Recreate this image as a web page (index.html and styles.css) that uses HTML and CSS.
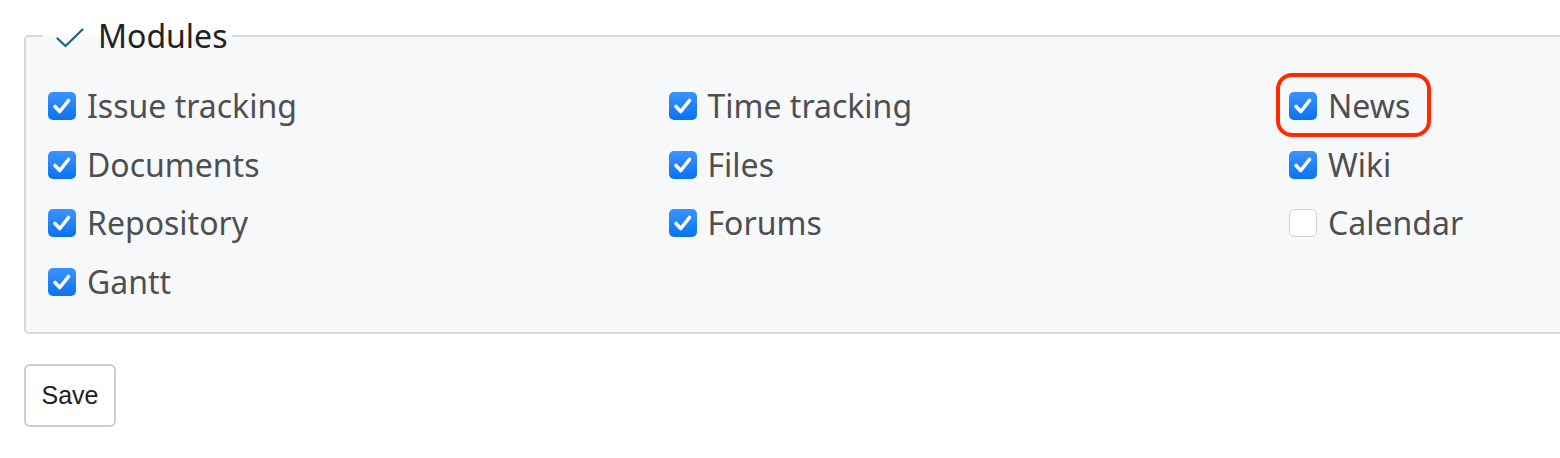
FILE: index.html
```html
<!DOCTYPE html>
<html>
<head>
<meta charset="utf-8">
<link rel="stylesheet" href="styles.css">
</head>
<body>
<div class="page">
  <fieldset class="modules">
    <legend class="legend">
      <svg class="legend-check" width="28" height="20" viewBox="0 0 28 20"><path d="M1.5 10.5 L9.5 18 L26.5 1.5" fill="none" stroke="#1f5f86" stroke-width="2.2" stroke-linecap="round" stroke-linejoin="round"/></svg>
      <span>Modules</span>
    </legend>
    <div class="grid">
      <label class="item"><span class="box on"><svg viewBox="0 0 28 28"><path d="M7 14.5 L11.8 19.5 L20.5 8.5" fill="none" stroke="#fff" stroke-width="3.6" stroke-linecap="round" stroke-linejoin="round"/></svg></span>Issue tracking</label>
      <label class="item"><span class="box on"><svg viewBox="0 0 28 28"><path d="M7 14.5 L11.8 19.5 L20.5 8.5" fill="none" stroke="#fff" stroke-width="3.6" stroke-linecap="round" stroke-linejoin="round"/></svg></span>Time tracking</label>
      <label class="item highlight"><span class="box on"><svg viewBox="0 0 28 28"><path d="M7 14.5 L11.8 19.5 L20.5 8.5" fill="none" stroke="#fff" stroke-width="3.6" stroke-linecap="round" stroke-linejoin="round"/></svg></span>News</label>
      <label class="item"><span class="box on"><svg viewBox="0 0 28 28"><path d="M7 14.5 L11.8 19.5 L20.5 8.5" fill="none" stroke="#fff" stroke-width="3.6" stroke-linecap="round" stroke-linejoin="round"/></svg></span>Documents</label>
      <label class="item"><span class="box on"><svg viewBox="0 0 28 28"><path d="M7 14.5 L11.8 19.5 L20.5 8.5" fill="none" stroke="#fff" stroke-width="3.6" stroke-linecap="round" stroke-linejoin="round"/></svg></span>Files</label>
      <label class="item"><span class="box on"><svg viewBox="0 0 28 28"><path d="M7 14.5 L11.8 19.5 L20.5 8.5" fill="none" stroke="#fff" stroke-width="3.6" stroke-linecap="round" stroke-linejoin="round"/></svg></span>Wiki</label>
      <label class="item"><span class="box on"><svg viewBox="0 0 28 28"><path d="M7 14.5 L11.8 19.5 L20.5 8.5" fill="none" stroke="#fff" stroke-width="3.6" stroke-linecap="round" stroke-linejoin="round"/></svg></span>Repository</label>
      <label class="item"><span class="box on"><svg viewBox="0 0 28 28"><path d="M7 14.5 L11.8 19.5 L20.5 8.5" fill="none" stroke="#fff" stroke-width="3.6" stroke-linecap="round" stroke-linejoin="round"/></svg></span>Forums</label>
      <label class="item"><span class="box off"></span>Calendar</label>
      <label class="item"><span class="box on"><svg viewBox="0 0 28 28"><path d="M7 14.5 L11.8 19.5 L20.5 8.5" fill="none" stroke="#fff" stroke-width="3.6" stroke-linecap="round" stroke-linejoin="round"/></svg></span>Gantt</label>
    </div>
  </fieldset>
  <button class="save">Save</button>
</div>
</body>
</html>
```
FILE: styles.css
```css
html, body {
  margin: 0;
  padding: 0;
  background: #ffffff;
  overflow: hidden;
}
.page {
  padding: 16px 0 0 24px;
  font-family: "Noto Sans", "Open Sans", sans-serif;
}
.modules {
  margin: 0;
  width: 1620px;
  box-sizing: border-box;
  border: 2px solid #d4d9e0;
  border-radius: 5px;
  background: #f7f8fa;
  padding: 20px 0 21px 22px;
  min-width: 0;
}
.legend {
  margin-left: -5px;
  padding: 0 5px 0 13px;
  display: flex;
  align-items: center;
  gap: 14px;
  font-size: 32px;
  line-height: 40px;
  color: #222;
}
.legend-check {
  display: block;
  margin-top: 3px;
}
.grid {
  display: grid;
  grid-template-columns: 620.5px 620.5px 620.5px;
  grid-auto-rows: 58.7px;
  align-items: center;
}
.item {
  position: relative;
  justify-self: start;
  display: inline-flex;
  align-items: center;
  height: 58.7px;
  gap: 11px;
  font-size: 32px;
  color: #4f4f4f;
}
.box {
  width: 28px;
  height: 28px;
  box-sizing: border-box;
  border-radius: 5px;
  flex: none;
  margin-top: 1px;
}
.box svg {
  display: block;
  width: 28px;
  height: 28px;
}
.box.on {
  background: linear-gradient(#3a94ff, #0a72f0);
}
.box.off {
  background: #fff;
  border: 1.5px solid #d3d3d3;
}
.highlight::after {
  content: "";
  position: absolute;
  left: -13px;
  right: -21px;
  top: -3px;
  bottom: -2px;
  border: 4px solid #ff2a00;
  border-radius: 16px;
}
.save {
  display: block;
  margin-top: 30px;
  width: 92px;
  height: 63px;
  background: #fff;
  border: 2px solid #cccccc;
  border-radius: 6px;
  font-family: "Liberation Sans", Arial, sans-serif;
  font-size: 25px;
  color: #222;
  padding: 0;
}
```
